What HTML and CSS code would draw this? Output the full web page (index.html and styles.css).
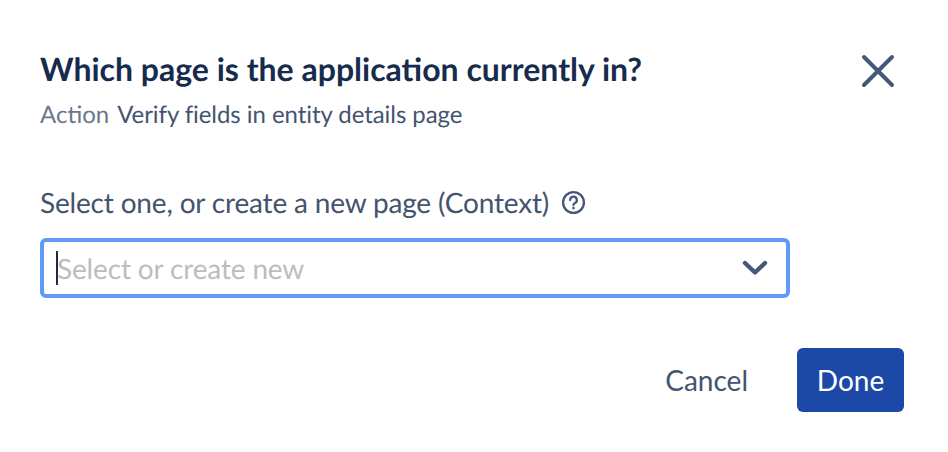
FILE: index.html
```html
<!DOCTYPE html>
<html lang="en">
<head>
<meta charset="utf-8">
<title>Which page</title>
<link rel="stylesheet" href="styles.css">
</head>
<body>
<div class="dialog">
  <header class="head">
    <div class="head-text">
      <h1 class="title">Which page is the application currently in?</h1>
      <p class="sub"><span class="sub-label">Action</span><span class="sub-value">Verify fields in entity details page</span></p>
    </div>
    <button class="close" aria-label="Close">
      <svg width="34" height="34" viewBox="0 0 34 34"><path d="M3 3L31 31M31 3L3 31" fill="none" stroke="#46587a" stroke-width="4" stroke-linecap="round"/></svg>
    </button>
  </header>
  <div class="field">
    <div class="label-row">
      <span class="label">Select one, or create a new page (Context)</span>
      <svg class="help" width="25" height="25" viewBox="0 0 24 24"><circle cx="12" cy="12" r="10" fill="none" stroke="#46587a" stroke-width="2.2"/><path d="M8.8 9.6a3.2 3.2 0 1 1 4.6 2.9c-.9.45-1.4 1-1.4 1.9" fill="none" stroke="#46587a" stroke-width="2.2" stroke-linecap="round"/><circle cx="12" cy="17.3" r="1.3" fill="#46587a"/></svg>
    </div>
    <div class="select">
      <span class="caret"></span>
      <span class="placeholder">Select or create new</span>
      <svg class="chev" width="26" height="16" viewBox="0 0 26 16"><path d="M3 3L13 12.5L23 3" fill="none" stroke="#46587a" stroke-width="4.4" stroke-linecap="round" stroke-linejoin="round"/></svg>
    </div>
  </div>
  <footer class="actions">
    <button class="cancel">Cancel</button>
    <button class="done">Done</button>
  </footer>
</div>
</body>
</html>
```
FILE: styles.css
```css
* { box-sizing: border-box; }
html, body { margin: 0; padding: 0; background: #fff; }
body { width: 948px; height: 452px; overflow: hidden; font-family: Lato, "Liberation Sans", sans-serif; text-rendering: geometricPrecision; }
.dialog { padding: 47px 44px 40px 40px; display: flex; flex-direction: column; }
.head { display: flex; justify-content: space-between; align-items: flex-start; }
.title { margin: 0; font-size: 32px; line-height: 44px; font-weight: 700; color: #172b4d; }
.sub { margin: 9px 0 0; display: flex; gap: 8px; font-size: 24px; line-height: 30px; }
.sub-label { color: #6b778c; }
.sub-value { color: #44546f; letter-spacing: -0.06px; }
.close { border: 0; background: none; padding: 0; margin: 7px 9px 0 0; width: 34px; height: 34px; display: block; }
.close svg { display: block; }
.field { margin-top: 56px; width: 750px; }
.label-row { display: flex; align-items: center; gap: 12px; height: 32px; }
.label { font-size: 28px; line-height: 32px; color: #44546f; letter-spacing: -0.17px; }
.help { display: block; }
.select { margin-top: 20px; height: 60px; border: 4px solid #5f9bf6; border-radius: 6px; display: flex; align-items: center; padding: 0 18px 0 12px; position: relative; }
.caret { width: 2px; height: 34px; background: #1f2a3d; flex: none; }
.placeholder { flex: 1; font-size: 28px; color: #bdbdbd; margin-left: -1px; letter-spacing: -0.15px; }
.chev { display: block; }
.actions { margin-top: 50px; display: flex; justify-content: flex-end; align-items: center; gap: 49px; }
.cancel { border: 0; background: none; padding: 0; font: inherit; font-size: 28px; color: #44546f; }
.done { border: 0; width: 107px; height: 64px; border-radius: 6px; background: #1c48a8; color: #fff; font: inherit; font-size: 28px; }
```
